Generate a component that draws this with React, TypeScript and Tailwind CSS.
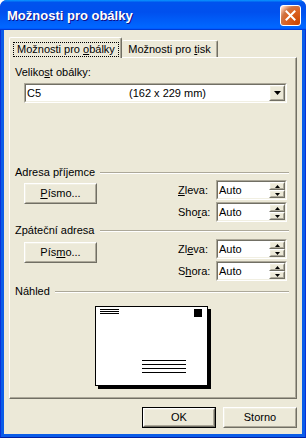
import React from "react";

function Raised({ className = "", children }: { className?: string; children?: React.ReactNode }) {
  return (
    <div className={`box-border border border-t-white border-l-white border-r-[#716f64] border-b-[#716f64] bg-[#ece9d8] ${className}`}>
      <div className="box-border h-full w-full border border-t-[#f1efe2] border-l-[#f1efe2] border-r-[#aca899] border-b-[#aca899] flex items-center justify-center">
        {children}
      </div>
    </div>
  );
}

function Sunken({ className = "", children }: { className?: string; children?: React.ReactNode }) {
  return (
    <div className={`box-border border border-t-[#aca899] border-l-[#aca899] border-r-white border-b-white ${className}`}>
      <div className="box-border h-full w-full border border-t-[#716f64] border-l-[#716f64] border-r-[#f1efe2] border-b-[#f1efe2] bg-white">
        {children}
      </div>
    </div>
  );
}

function PushButton({ children, def = false }: { children: React.ReactNode; def?: boolean }) {
  if (def) {
    return (
      <div className="box-border w-[74px] h-[21px] border border-black">
        <Raised className="h-full w-full">{children}</Raised>
      </div>
    );
  }
  return <Raised className="w-[74px] h-[21px]">{children}</Raised>;
}

function Down({ w = 7 }: { w?: number }) {
  if (w === 7)
    return (
      <svg width="7" height="4" viewBox="0 0 7 4">
        <path d="M0 0h7L3.5 4z" fill="#000" />
      </svg>
    );
  return (
    <svg width="5" height="3" viewBox="0 0 5 3">
      <path d="M0 0h5L2.5 3z" fill="#000" />
    </svg>
  );
}

function Up() {
  return (
    <svg width="5" height="3" viewBox="0 0 5 3">
      <path d="M0 3h5L2.5 0z" fill="#000" />
    </svg>
  );
}

function SpinEdit() {
  return (
    <Sunken className="w-[71px] h-[20px]">
      <div className="flex h-full">
        <span className="flex-1 pl-[1px] leading-[16px]">Auto</span>
        <div className="flex flex-col w-[16px]">
          <Raised className="h-[8px] w-[16px]">
            <Up />
          </Raised>
          <Raised className="h-[8px] w-[16px]">
            <Down w={5} />
          </Raised>
        </div>
      </div>
    </Sunken>
  );
}

function GroupHeader({ children }: { children: React.ReactNode }) {
  return (
    <div className="flex items-center h-[13px] leading-[13px] mr-[-1px]">
      <span>{children}</span>
      <div className="flex-1 ml-[5px] h-[2px] border-t border-t-[#aca899] border-b border-b-white" />
    </div>
  );
}

function AddressGroup({
  pismo,
  zleva,
  shora,
}: {
  pismo: React.ReactNode;
  zleva: React.ReactNode;
  shora: React.ReactNode;
}) {
  return (
    <div className="flex items-start">
      <div className="ml-[9px] mt-[3px]">
        <Raised className="w-[73px] h-[21px]">{pismo}</Raised>
      </div>
      <div className="ml-[81px] flex flex-col gap-[2px]">
        <div className="flex items-center h-[20px]">
          <span className="w-[38px]">{zleva}</span>
          <SpinEdit />
        </div>
        <div className="flex items-center h-[20px]">
          <span className="w-[38px]">{shora}</span>
          <SpinEdit />
        </div>
      </div>
    </div>
  );
}

function Envelope() {
  return (
    <svg width="116" height="83" viewBox="0 0 116 83">
      <rect x="3" y="3" width="113" height="80" fill="#000" />
      <rect x="0.5" y="0.5" width="112" height="79" fill="#fff" stroke="#000" strokeWidth="1" />
      <rect x="5" y="3" width="19" height="1" fill="#000" />
      <rect x="5" y="5" width="19" height="1" fill="#000" />
      <rect x="5" y="7" width="19" height="1" fill="#000" />
      <rect x="99" y="3" width="8" height="8" fill="#000" />
      <rect x="47" y="54" width="44" height="1" fill="#000" />
      <rect x="47" y="58" width="44" height="1" fill="#000" />
      <rect x="47" y="62" width="44" height="1" fill="#000" />
      <rect x="47" y="66" width="44" height="1" fill="#000" />
    </svg>
  );
}

export default function App() {
  return (
    <div className="w-[306px] h-[438px] flex flex-col rounded-t-[7px] overflow-hidden bg-[#0831d9] text-[11px] text-black font-[family-name:'Liberation_Sans',Arial,sans-serif]">
      {/* Title bar */}
      <div className="h-[30px] shrink-0 flex items-center pl-[7px] pr-[5px] bg-[linear-gradient(180deg,#0997ff,#0053ee_8%,#0050ee_40%,#06f_88%,#06f_93%,#005bff_95%,#003dd7_96%,#003dd7)]">
        <span className="flex-1 text-white font-bold text-[13px] leading-[16px] pt-[1px] [text-shadow:1px_1px_#0f1089]">
          Možnosti pro obálky
        </span>
        <div className="box-border w-[21px] h-[21px] rounded-[3px] border border-white flex items-center justify-center bg-[radial-gradient(circle_at_90%_90%,#cc4600_0,#dc6527_55%,#cd7546_70%,#ffccb2_90%,#fff_100%)]">
          <svg width="11" height="11" viewBox="0 0 11 11">
            <path d="M1.5 1.5L9.5 9.5M9.5 1.5L1.5 9.5" stroke="#fff" strokeWidth="2" strokeLinecap="square" />
          </svg>
        </div>
      </div>

      {/* Frame + client */}
      <div className="flex-1 flex flex-col box-border bg-[#0a5ce8] border-l border-r border-b border-l-[#0831d9] border-r-[#0831d9] border-b-[#001ea0] px-[3px] pb-[3px]">
        <div className="flex-1 flex flex-col bg-[#ece9d8] pt-[7px] pl-[5px] pr-[5px]">
          {/* Tabs */}
          <div className="h-[20px] flex items-end">
            <div className="relative z-10 box-border w-[113px] h-[21px] mb-[-1px] bg-[#ece9d8] rounded-t-[2px] border-t border-l border-r border-t-white border-l-white border-r-[#716f64] shadow-[inset_-1px_0_#aca899] pl-[3px] pt-[3px]">
              <div className="box-border inline-block border border-dotted border-black px-[3px] h-[15px] leading-[13px]">
                Možnosti pro <span className="underline underline-offset-[1px]">o</span>bálky
              </div>
            </div>
            <div className="box-border w-[96px] h-[17px] bg-[#ece9d8] rounded-t-[2px] border-t border-r border-t-white border-r-[#716f64] shadow-[inset_-1px_0_#aca899] flex items-center justify-center leading-[13px]">
              <span>
                Možnosti pro <span className="underline underline-offset-[1px]">t</span>isk
              </span>
            </div>
          </div>

          {/* Panel */}
          <div className="box-border w-[288px] h-[342px] border border-t-white border-l-white border-r-[#716f64] border-b-[#716f64] shadow-[inset_-1px_-1px_#aca899] pt-[8px] pl-[5px] pr-[8px] flex flex-col">
            <div className="h-[13px] leading-[13px]">
              Veliko<span className="underline underline-offset-[1px]">s</span>t obálky:
            </div>
            <div className="mt-[4px] ml-[9px]">
              <Sunken className="w-[263px] h-[20px]">
                <div className="flex items-center h-full">
                  <span className="w-[103px] pl-[1px] leading-[16px]">C5</span>
                  <span className="flex-1 leading-[16px]">(162 x 229 mm)</span>
                  <Raised className="w-[16px] h-[16px]">
                    <Down />
                  </Raised>
                </div>
              </Sunken>
            </div>

            <div className="mt-[63px]">
              <GroupHeader>Adresa příjemce</GroupHeader>
            </div>
            <div className="mt-[1px]">
              <AddressGroup
                pismo={
                  <span>
                    <span className="underline underline-offset-[1px]">P</span>ísmo...
                  </span>
                }
                zleva={
                  <span>
                    <span className="underline underline-offset-[1px]">Z</span>leva:
                  </span>
                }
                shora={
                  <span>
                    Sho<span className="underline underline-offset-[1px]">r</span>a:
                  </span>
                }
              />
            </div>

            <div className="mt-[2px]">
              <GroupHeader>Zpáteční adresa</GroupHeader>
            </div>
            <div className="mt-[2px]">
              <AddressGroup
                pismo={
                  <span>
                    Pís<span className="underline underline-offset-[1px]">m</span>o...
                  </span>
                }
                zleva={
                  <span>
                    Zl<span className="underline underline-offset-[1px]">e</span>va:
                  </span>
                }
                shora={
                  <span>
                    S<span className="underline underline-offset-[1px]">h</span>ora:
                  </span>
                }
              />
            </div>

            <div className="mt-[4px]">
              <GroupHeader>Náhled</GroupHeader>
            </div>
            <div className="mt-[8px] ml-[80px]">
              <Envelope />
            </div>
          </div>

          {/* Bottom buttons */}
          <div className="mt-[8px] flex justify-end gap-[7px] w-[288px]">
            <PushButton def>OK</PushButton>
            <PushButton>Storno</PushButton>
          </div>
        </div>
      </div>
    </div>
  );
}
